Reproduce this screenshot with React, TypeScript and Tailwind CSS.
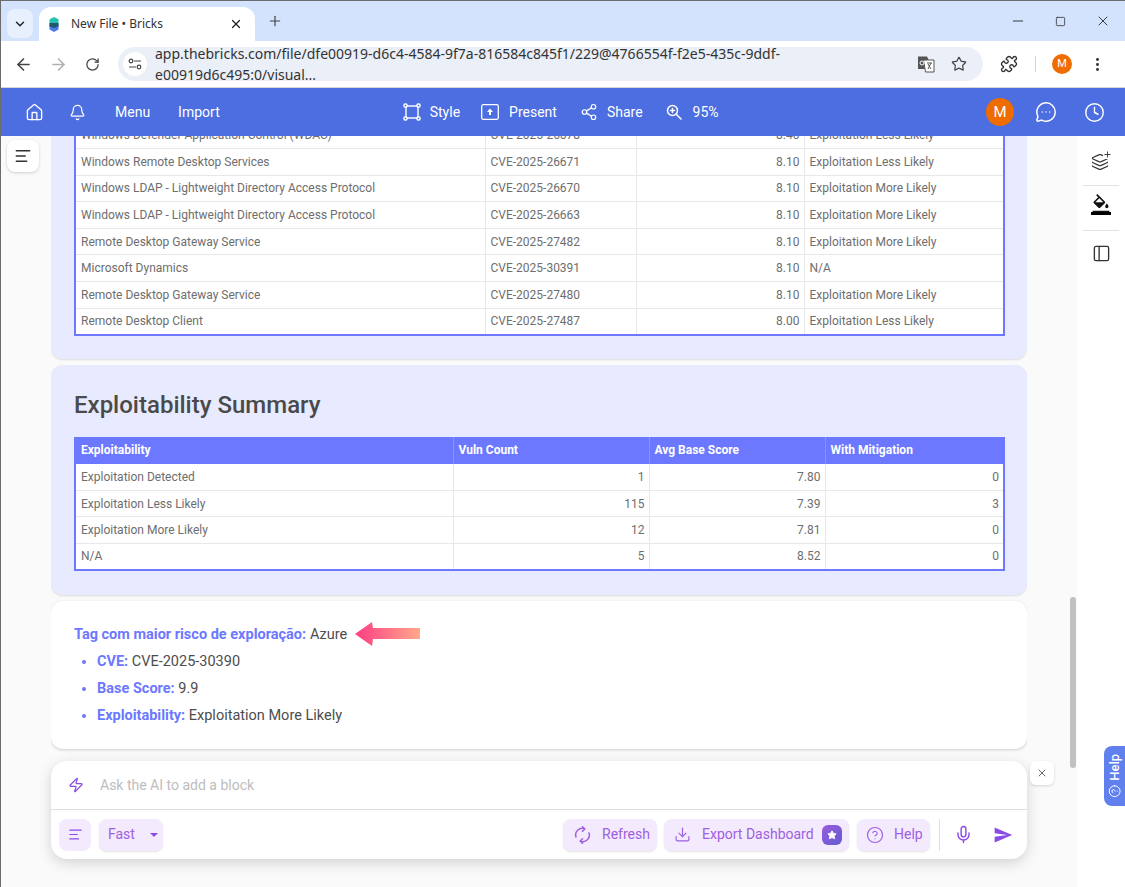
import {
  AlignLeft,
  ArrowLeft,
  ArrowRight,
  Bell,
  ChevronDown,
  CircleHelp,
  Clock,
  Download,
  Home,
  Layers,
  MessageCircleMore,
  Mic,
  Minus,
  MoreVertical,
  PanelLeft,
  Plus,
  Puzzle,
  RotateCw,
  Share2,
  Square,
  Star,
  X,
  Zap,
} from 'lucide-react';
import { MdFormatColorFill, MdSend } from 'react-icons/md';

const vulnRows = [
  ['Windows Defender Application Control (WDAC)', 'CVE-2025-26678', '8.40', 'Exploitation Less Likely'],
  ['Windows Remote Desktop Services', 'CVE-2025-26671', '8.10', 'Exploitation Less Likely'],
  ['Windows LDAP - Lightweight Directory Access Protocol', 'CVE-2025-26670', '8.10', 'Exploitation More Likely'],
  ['Windows LDAP - Lightweight Directory Access Protocol', 'CVE-2025-26663', '8.10', 'Exploitation More Likely'],
  ['Remote Desktop Gateway Service', 'CVE-2025-27482', '8.10', 'Exploitation More Likely'],
  ['Microsoft Dynamics', 'CVE-2025-30391', '8.10', 'N/A'],
  ['Remote Desktop Gateway Service', 'CVE-2025-27480', '8.10', 'Exploitation More Likely'],
  ['Remote Desktop Client', 'CVE-2025-27487', '8.00', 'Exploitation Less Likely'],
];

const summaryRows = [
  ['Exploitation Detected', '1', '7.80', '0'],
  ['Exploitation Less Likely', '115', '7.39', '3'],
  ['Exploitation More Likely', '12', '7.81', '0'],
  ['N/A', '5', '8.52', '0'],
];

function StyleIcon() {
  return (
    <svg width="18" height="18" viewBox="0 0 18 18" fill="none" stroke="white" strokeWidth="1.4">
      <rect x="3" y="3" width="12" height="12" />
      <rect x="1" y="1" width="3" height="3" rx="1" fill="#4c6ee0" />
      <rect x="14" y="1" width="3" height="3" rx="1" fill="#4c6ee0" />
      <rect x="1" y="14" width="3" height="3" rx="1" fill="#4c6ee0" />
      <rect x="14" y="14" width="3" height="3" rx="1" fill="#4c6ee0" />
    </svg>
  );
}

function PresentIcon() {
  return (
    <svg width="18" height="16" viewBox="0 0 18 16" fill="none">
      <rect x="0.7" y="0.7" width="16.6" height="14.6" rx="1.5" stroke="white" strokeWidth="1.3" />
      <path d="M9 4.5 12 8H10V11H8V8H6Z" fill="white" />
    </svg>
  );
}

function ZoomIcon() {
  return (
    <svg width="16" height="16" viewBox="0 0 16 16" fill="none" stroke="white" strokeWidth="1.5" strokeLinecap="round">
      <circle cx="6.5" cy="6.5" r="5" />
      <path d="M10.5 10.5 15 15M4.5 6.5h4M6.5 4.5v4" />
    </svg>
  );
}

function TuneIcon() {
  return (
    <svg width="14" height="12" viewBox="0 0 14 12" fill="none" stroke="#444" strokeWidth="1.2">
      <circle cx="3" cy="3" r="1.8" />
      <path d="M6 3h7M1 9h7" />
      <circle cx="11" cy="9" r="1.8" />
    </svg>
  );
}

function TranslateIcon() {
  return (
    <svg width="18" height="18" viewBox="0 0 18 18">
      <path d="M1 1.5h9l1.5 3V14H1Z" fill="#555" />
      <path d="M6.5 5h10.5v12H8.5Z" fill="white" stroke="#555" strokeWidth="1" />
      <circle cx="5" cy="8" r="2" fill="none" stroke="white" strokeWidth="1" />
      <path d="M10 8h5M14 8l-3 6M11 9l3 5" stroke="#555" strokeWidth="1" fill="none" />
    </svg>
  );
}

function BricksLogo() {
  return (
    <svg width="10" height="15" viewBox="0 0 10 15">
      <path d="M5 0 9.5 2.2V7.5H.5V2.2Z" fill="#27c2ae" />
      <path d="M.5 7.5h9v5L5 15 .5 12.5Z" fill="#4c7be8" />
      <path d="M.5 6h9v3.5L5 11 .5 9.5Z" fill="#20566f" />
    </svg>
  );
}

function LayersPlusIcon() {
  return (
    <div className="relative h-5 w-5">
      <Layers size={18} strokeWidth={1.6} className="absolute bottom-0 left-0 text-[#333]" />
      <Plus size={9} strokeWidth={2.4} className="absolute -top-[1px] -right-[1px] bg-white text-[#333]" />
    </div>
  );
}

function SyncIcon() {
  return (
    <svg width="17" height="18" viewBox="0 0 17 18" fill="none" stroke="#a05ee0" strokeWidth="1.5" strokeLinecap="round" strokeLinejoin="round">
      <path d="M2 11A6.5 6.5 0 0 1 10.5 2.8" />
      <path d="M8.5.8 10.8 3 8.5 5.2" />
      <path d="M15 7a6.5 6.5 0 0 1-8.500 8.200" />
      <path d="M8.500 17.200 6.200 15 8.500 12.800" />
    </svg>
  );
}

function PinkArrow() {
  return (
    <svg width="66" height="26" viewBox="0 0 66 26">
      <defs>
        <linearGradient id="pink-arrow" x1="0" y1="0" x2="1" y2="0">
          <stop offset="0" stopColor="#ff3d84" />
          <stop offset="1" stopColor="#ffa88a" />
        </linearGradient>
      </defs>
      <path
        d="M1 13 18 1 19 7H64.500A1 1 0 0 1 66 8V17A1 1 0 0 1 64.500 18H19L18 25Z"
        fill="url(#pink-arrow)"
      />
    </svg>
  );
}

function DataTable({
  rows,
  widths,
  header,
  rowClass,
}: {
  rows: string[][];
  widths: string[];
  header?: string[];
  rowClass: string;
}) {
  return (
    <table className="w-full table-fixed border-collapse border-2 border-t-0 border-[#6c78ff] bg-white text-[12px] text-[#6e6e6e]">
      <colgroup>
        {widths.map((w, i) => (
          <col key={i} style={{ width: w }} />
        ))}
      </colgroup>
      {header && (
        <thead>
          <tr className="h-[27px] bg-[#6c78ff] text-left font-bold text-white">
            {header.map((h, i) => (
              <th key={h} className={`px-[5px] ${i > 0 ? 'border-l border-[#8791ff]' : ''}`}>
                {h}
              </th>
            ))}
          </tr>
        </thead>
      )}
      <tbody>
        {rows.map((row, r) => (
          <tr key={r} className={`${rowClass} border-t border-[#e8e8e8] first:border-t-0`}>
            {row.map((cell, c) => (
              <td
                key={c}
                className={`truncate border-l border-[#e8e8e8] px-[5px] first:border-l-0 ${
                  /^[\d.]+$/.test(cell) ? 'pr-[4px] text-right' : ''
                }`}
              >
                {cell}
              </td>
            ))}
          </tr>
        ))}
      </tbody>
    </table>
  );
}

function BrowserChrome() {
  return (
    <>
      <div className="flex h-[40px] items-end bg-[#d3e3fd] pl-[6px] text-[#222]">
        <div className="mb-[3px] flex h-[29px] w-[26px] items-center justify-center rounded-lg bg-[#e9f0fd]">
          <ChevronDown size={14} strokeWidth={2.5} />
        </div>
        <div className="ml-[6px] flex h-[34px] w-[216px] items-center rounded-t-xl bg-white pl-[10px] pr-[12px]">
          <BricksLogo />
          <span className="ml-[12px] flex-1 text-[12px] [font-family:'Noto_Sans',sans-serif] text-[#333]">New File • Bricks</span>
          <X size={14} strokeWidth={2.2} />
        </div>
        <div className="mb-[12px] ml-[12px]">
          <Plus size={16} strokeWidth={1.8} className="text-[#444]" />
        </div>
        <div className="mb-[12px] ml-auto flex items-center gap-[29px] pr-[14px] text-[#222]">
          <Minus size={16} strokeWidth={1.3} />
          <Square size={11} strokeWidth={1.6} />
          <X size={16} strokeWidth={1.3} />
        </div>
      </div>
      <div className="flex h-[47px] items-center border-b border-[#d5d5d5] bg-white pl-[13px] text-[#444]">
        <ArrowLeft size={19} strokeWidth={2} />
        <ArrowRight size={19} strokeWidth={2} className="ml-[16px] text-[#b0b0b0]" />
        <RotateCw size={15} strokeWidth={2} className="ml-[17px]" />
        <div className="ml-[18px] flex h-[34px] w-[865px] items-center rounded-full bg-[#ebeff7] pl-[5px] pr-[16px]">
          <div className="flex h-[24px] w-[24px] items-center justify-center rounded-full bg-white">
            <TuneIcon />
          </div>
          <span className="ml-[8px] flex-1 text-[14px] [font-family:'Noto_Sans',sans-serif] text-[#333]">
            app.thebricks.com/file/dfe00919-d6c4-4584-9f7a-816584c845f1/229@4766554f-f2e5-435c-9ddf-e00919d6c495:0/visual...
          </span>
          <TranslateIcon />
          <Star size={16} strokeWidth={1.8} className="ml-[16px]" />
        </div>
        <Puzzle size={18} strokeWidth={1.8} className="ml-[17px] text-[#333]" />
        <div className="ml-[17px] h-[16px] w-px bg-[#c9d9f2]" />
        <div className="ml-[16px] flex h-[20px] w-[20px] items-center justify-center rounded-full bg-[#ef6c00] text-[11px] text-white">
          M
        </div>
        <MoreVertical size={17} strokeWidth={2.2} className="ml-[17px] text-[#333]" />
      </div>
    </>
  );
}

function AppBar() {
  return (
    <div className="flex h-[48px] items-center bg-[#4c6ee0] text-[14px] text-white">
      <Home size={19} strokeWidth={1.7} className="ml-[24px]" />
      <Bell size={17} strokeWidth={1.7} className="ml-[25px]" />
      <span className="ml-[29px]">Menu</span>
      <span className="ml-[28px]">Import</span>
      <div className="ml-[183px] flex items-center">
        <StyleIcon />
        <span className="ml-[9px]">Style</span>
        <div className="ml-[21px]"><PresentIcon /></div>
        <span className="ml-[10px]">Present</span>
        <Share2 size={18} strokeWidth={1.6} className="ml-[23px]" />
        <span className="ml-[9px]">Share</span>
        <div className="ml-[23px]"><ZoomIcon /></div>
        <span className="ml-[11px]">95%</span>
      </div>
      <div className="ml-auto flex items-center pr-[20px]">
        <div className="flex h-[28px] w-[28px] items-center justify-center rounded-full bg-[#ef6c00] text-[15px]">M</div>
        <MessageCircleMore size={22} strokeWidth={1.6} className="ml-[21px]" />
        <Clock size={21} strokeWidth={1.6} className="ml-[27px]" />
      </div>
    </div>
  );
}

function PromptBox() {
  const chip = 'flex h-[32px] items-center rounded-lg bg-[#f3ebfd] shadow-[0_1px_2px_rgba(0,0,0,0.12)]';
  return (
    <div className="absolute left-[50px] top-[625px] h-[98px] w-[976px] rounded-2xl bg-white text-[14px] text-[#a05ee0] shadow-[0_4px_14px_rgba(0,0,0,0.16)]">
      <div className="flex h-[49px] items-center border-b border-[#dedede] pl-[17px]">
        <Zap size={16} strokeWidth={1.8} className="text-[#8a4be6]" />
        <span className="ml-[16px] text-[#bdbdbd]">Ask the AI to add a block</span>
      </div>
      <div className="flex h-[49px] items-center pl-[8px]">
        <div className="flex h-[32px] w-[32px] items-center justify-center rounded-lg bg-[#f3ebfd]">
          <AlignLeft size={15} strokeWidth={1.8} className="text-[#8a4be6]" />
        </div>
        <div className={`${chip} ml-[8px] w-[64px] pl-[9px]`}>
          Fast
          <svg width="8" height="4" viewBox="0 0 8 4" className="ml-[15px]">
            <path d="M0 0h8L4 4Z" fill="#8a4be6" />
          </svg>
        </div>
        <div className={`${chip} ml-[400px] w-[94px] pl-[11px]`}>
          <SyncIcon />
          <span className="ml-[11px]">Refresh</span>
        </div>
        <div className={`${chip} ml-[7px] w-[185px] pl-[10px]`}>
          <Download size={17} strokeWidth={1.7} />
          <span className="ml-[11px]">Export Dashboard</span>
          <div className="ml-[8px] flex h-[20px] w-[20px] items-center justify-center rounded-md bg-gradient-to-br from-[#9b5ae0] to-[#5f5bd0]">
            <Star size={10} fill="white" className="text-white" />
          </div>
        </div>
        <div className={`${chip} ml-[8px] w-[73px] pl-[9px]`}>
          <CircleHelp size={18} strokeWidth={1.6} />
          <span className="ml-[10px]">Help</span>
        </div>
        <div className="ml-[9px] h-[32px] w-px bg-[#dedede]" />
        <Mic size={19} strokeWidth={1.8} className="ml-[14px] text-[#8a4be6]" />
        <MdSend size={20} className="ml-[20px] text-[#8a4be6]" />
      </div>
    </div>
  );
}

export default function App() {
  return (
    <div className="flex h-[887px] w-[1125px] flex-col overflow-hidden border-l border-t border-[#6b6b6b] [font-family:Roboto,sans-serif]">
      <BrowserChrome />
      <AppBar />
      <div className="relative flex min-h-0 flex-1 bg-[#fafafa]">
        <div className="w-[50px] pl-[6px] pt-[4px]">
          <div className="flex h-[32px] w-[32px] items-center justify-center rounded-lg bg-white shadow-[0_1px_3px_rgba(0,0,0,0.18)]">
            <AlignLeft size={18} strokeWidth={1.8} className="text-[#333]" />
          </div>
        </div>

        <div className="flex w-[976px] flex-col gap-[6px] overflow-hidden">
          <section className="-mt-[14px] rounded-b-xl bg-[#e8ebff] px-[23px] pb-[23px] shadow-[0_1px_2px_rgba(0,0,0,0.12)]">
            <DataTable
              rows={vulnRows}
              widths={['410px', '151px', '168px', '200px']}
              rowClass="h-[26.600px]"
            />
          </section>

          <section className="rounded-xl bg-[#e8ebff] px-[23px] pb-[24px] pt-[24px] shadow-[0_1px_2px_rgba(0,0,0,0.12)]">
            <h2 className="text-[24px] leading-[32px] font-medium text-[#4a4a4a]">Exploitability Summary</h2>
            <div className="mt-[16px]">
              <DataTable
                rows={summaryRows}
                header={['Exploitability', 'Vuln Count', 'Avg Base Score', 'With Mitigation']}
                widths={['378px', '196px', '176px', '179px']}
                rowClass="h-[26.500px]"
              />
            </div>
          </section>

          <section className="h-[148px] rounded-xl bg-white px-[23px] pt-[20px] text-[14.500px] leading-[27px] text-[#4d4d4d] shadow-[0_1px_3px_rgba(0,0,0,0.18)]">
            <p className="flex items-center">
              <b className="font-bold text-[#6c78ff]">Tag com maior risco de exploração:</b>
              <span className="ml-[4px]">Azure</span>
              <span className="ml-[7px]"><PinkArrow /></span>
            </p>
            <ul className="list-disc pl-[23px] marker:text-[#6c78ff]">
              <li><b className="font-bold text-[#6c78ff]">CVE:</b> CVE-2025-30390</li>
              <li><b className="font-bold text-[#6c78ff]">Base Score:</b> 9.9</li>
              <li><b className="font-bold text-[#6c78ff]">Exploitability:</b> Exploitation More Likely</li>
            </ul>
          </section>
        </div>

        <div className="ml-auto flex w-[56px] bg-white">
          <div className="w-[8px] bg-[#fafafa]" />
          <div className="flex w-[48px] flex-col items-center pt-[15px]">
            <LayersPlusIcon />
            <div className="mt-[14px] h-px w-[36px] bg-[#e2e2e2]" />
            <div className="mt-[8px] flex h-[28px] flex-col items-center">
              <MdFormatColorFill size={20} className="-mb-[2px] text-[#111]" />
              <div className="h-[3px] w-[20px] bg-black" />
            </div>
            <div className="mt-[8px] h-px w-[36px] bg-[#e2e2e2]" />
            <PanelLeft size={19} strokeWidth={1.7} className="mt-[13px] text-[#333]" />
          </div>
        </div>

        {/* floating stuff on top of the page */}
        <div className="absolute left-[1069px] top-[461px] h-[171px] w-[6px] rounded-full bg-[#c1c1c1]" />
        <PromptBox />
        <div className="absolute left-[1029px] top-[625px] flex h-[24px] w-[24px] items-center justify-center rounded-md bg-white shadow-[0_1px_3px_rgba(0,0,0,0.15)]">
          <X size={12} className="text-[#666]" />
        </div>
        <div className="absolute left-[1103px] top-[610px] flex h-[60px] w-[21px] items-center justify-center rounded-l-lg bg-[#6080ee] text-white">
          <div className="flex -rotate-90 items-center gap-[4px] whitespace-nowrap text-[13px] font-medium">
            <CircleHelp size={13} strokeWidth={1.8} />
            Help
          </div>
        </div>
      </div>
    </div>
  );
}
